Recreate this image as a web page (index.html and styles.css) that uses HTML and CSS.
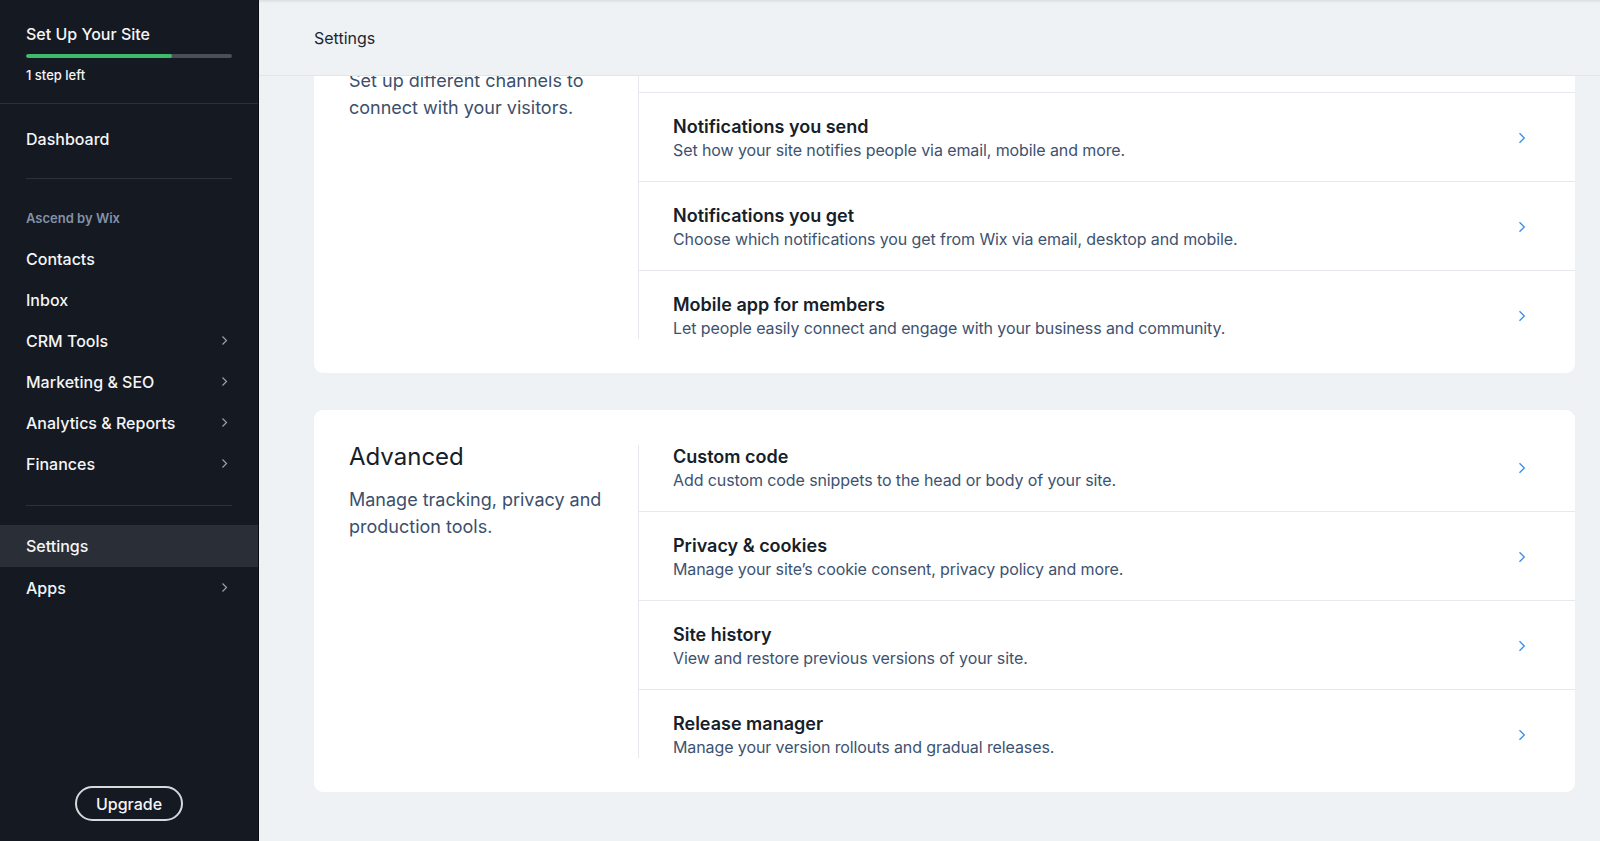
FILE: index.html
```html
<!DOCTYPE html>
<html lang="en">
<head>
<meta charset="utf-8">
<title>Settings</title>
<link rel="stylesheet" href="styles.css">
</head>
<body>
<div class="app">
  <aside class="sidebar">
    <div class="setup">
      <div class="setup-title">Set Up Your Site</div>
      <div class="progress"><div class="progress-fill" style="width:71%"></div></div>
      <div class="setup-sub">1 step left</div>
    </div>
    <nav class="nav">
      <div class="nav-item">Dashboard</div>
      <div class="nav-divider"></div>
      <div class="nav-label">Ascend by Wix</div>
      <div class="nav-item">Contacts</div>
      <div class="nav-item">Inbox</div>
      <div class="nav-item">CRM Tools<svg class="nav-chev" width="7" height="11" viewBox="0 0 7 11"><path d="M1.5 1.5 L5.5 5.5 L1.5 9.5" fill="none" stroke="#9ba1aa" stroke-width="1.2"/></svg></div>
      <div class="nav-item">Marketing &amp; SEO<svg class="nav-chev" width="7" height="11" viewBox="0 0 7 11"><path d="M1.5 1.5 L5.5 5.5 L1.5 9.5" fill="none" stroke="#9ba1aa" stroke-width="1.2"/></svg></div>
      <div class="nav-item">Analytics &amp; Reports<svg class="nav-chev" width="7" height="11" viewBox="0 0 7 11"><path d="M1.5 1.5 L5.5 5.5 L1.5 9.5" fill="none" stroke="#9ba1aa" stroke-width="1.2"/></svg></div>
      <div class="nav-item">Finances<svg class="nav-chev" width="7" height="11" viewBox="0 0 7 11"><path d="M1.5 1.5 L5.5 5.5 L1.5 9.5" fill="none" stroke="#9ba1aa" stroke-width="1.2"/></svg></div>
      <div class="nav-divider lower"></div>
      <div class="nav-item active">Settings</div>
      <div class="nav-item">Apps<svg class="nav-chev" width="7" height="11" viewBox="0 0 7 11"><path d="M1.5 1.5 L5.5 5.5 L1.5 9.5" fill="none" stroke="#9ba1aa" stroke-width="1.2"/></svg></div>
    </nav>
    <div class="upgrade-wrap"><button class="upgrade">Upgrade</button></div>
  </aside>

  <main class="main" id="main">
    <header class="topbar">Settings</header>
    <div class="content">
      <section class="card">
        <div class="card-intro">
          <h2 class="card-title">Communications</h2>
          <p class="card-desc">Set up different channels to connect with your visitors.</p>
        </div>
        <div class="rows">
          <div class="row">
            <div class="row-text">
              <div class="row-title">Social share</div>
              <div class="row-desc">Customize how your site appears when shared on social media.</div>
            </div>
            <svg class="chev" width="8" height="12" viewBox="0 0 8 12"><path d="M1.5 1.2 L6.3 6 L1.5 10.8" fill="none" stroke="#3a8ee8" stroke-width="1.3"/></svg>
          </div>
          <div class="row">
            <div class="row-text">
              <div class="row-title">Notifications you send</div>
              <div class="row-desc">Set how your site notifies people via email, mobile and more.</div>
            </div>
            <svg class="chev" width="8" height="12" viewBox="0 0 8 12"><path d="M1.5 1.2 L6.3 6 L1.5 10.8" fill="none" stroke="#3a8ee8" stroke-width="1.3"/></svg>
          </div>
          <div class="row">
            <div class="row-text">
              <div class="row-title">Notifications you get</div>
              <div class="row-desc">Choose which notifications you get from Wix via email, desktop and mobile.</div>
            </div>
            <svg class="chev" width="8" height="12" viewBox="0 0 8 12"><path d="M1.5 1.2 L6.3 6 L1.5 10.8" fill="none" stroke="#3a8ee8" stroke-width="1.3"/></svg>
          </div>
          <div class="row">
            <div class="row-text">
              <div class="row-title">Mobile app for members</div>
              <div class="row-desc">Let people easily connect and engage with your business and community.</div>
            </div>
            <svg class="chev" width="8" height="12" viewBox="0 0 8 12"><path d="M1.5 1.2 L6.3 6 L1.5 10.8" fill="none" stroke="#3a8ee8" stroke-width="1.3"/></svg>
          </div>
        </div>
      </section>

      <section class="card">
        <div class="card-intro">
          <h2 class="card-title">Advanced</h2>
          <p class="card-desc">Manage tracking, privacy and production tools.</p>
        </div>
        <div class="rows">
          <div class="row">
            <div class="row-text">
              <div class="row-title">Custom code</div>
              <div class="row-desc">Add custom code snippets to the head or body of your site.</div>
            </div>
            <svg class="chev" width="8" height="12" viewBox="0 0 8 12"><path d="M1.5 1.2 L6.3 6 L1.5 10.8" fill="none" stroke="#3a8ee8" stroke-width="1.3"/></svg>
          </div>
          <div class="row">
            <div class="row-text">
              <div class="row-title">Privacy &amp; cookies</div>
              <div class="row-desc">Manage your site’s cookie consent, privacy policy and more.</div>
            </div>
            <svg class="chev" width="8" height="12" viewBox="0 0 8 12"><path d="M1.5 1.2 L6.3 6 L1.5 10.8" fill="none" stroke="#3a8ee8" stroke-width="1.3"/></svg>
          </div>
          <div class="row">
            <div class="row-text">
              <div class="row-title">Site history</div>
              <div class="row-desc">View and restore previous versions of your site.</div>
            </div>
            <svg class="chev" width="8" height="12" viewBox="0 0 8 12"><path d="M1.5 1.2 L6.3 6 L1.5 10.8" fill="none" stroke="#3a8ee8" stroke-width="1.3"/></svg>
          </div>
          <div class="row">
            <div class="row-text">
              <div class="row-title">Release manager</div>
              <div class="row-desc">Manage your version rollouts and gradual releases.</div>
            </div>
            <svg class="chev" width="8" height="12" viewBox="0 0 8 12"><path d="M1.5 1.2 L6.3 6 L1.5 10.8" fill="none" stroke="#3a8ee8" stroke-width="1.3"/></svg>
          </div>
        </div>
      </section>
    </div>
  </main>
</div>
<script src="script.js"></script>
</body>
</html>
```

FILE: styles.css
```css
* { box-sizing: border-box; }
html, body { margin: 0; padding: 0; height: 100%; }
body {
  font-family: Inter, "Noto Sans", "Liberation Sans", sans-serif;
  background: #eff2f5;
  overflow: hidden;
}
.app {
  display: flex;
  height: 100vh;
}

/* Sidebar */
.sidebar {
  width: 259px;
  flex: 0 0 259px;
  background: #151922;
  border-right: 1px solid #0b0d12;
  color: #f4f5f7;
  display: flex;
  flex-direction: column;
}
.setup {
  padding: 24px 26px 20px;
  border-bottom: 1px solid #2b3039;
}
.setup-title {
  font-size: 16px;
  line-height: 20px;
  font-weight: 500;
}
.progress {
  margin-top: 10px;
  height: 4px;
  border-radius: 2px;
  background: #4a4e56;
  width: 206px;
  overflow: hidden;
}
.progress-fill {
  height: 100%;
  background: #3ebb6b;
  border-radius: 2px;
}
.setup-sub {
  margin-top: 9px;
  font-size: 13px;
  line-height: 16px;
  font-weight: 500;
}
.nav {
  padding-top: 14px;
  display: flex;
  flex-direction: column;
}
.nav-item {
  height: 41px;
  padding: 0 30px 0 26px;
  display: flex;
  align-items: center;
  justify-content: space-between;
  font-size: 16px;
  font-weight: 500;
  color: #f4f5f7;
}
.nav-item.active {
  background: #2a2e37;
  height: 42px;
}
.nav-chev { flex: none; }
.nav-divider {
  height: 1px;
  background: #2b3039;
  margin: 19px 26px 19px;
}
.nav-divider.lower {
  margin: 21px 26px 19px;
}
.nav-label {
  margin-top: 12px;
  margin-bottom: 12px;
  padding-left: 26px;
  font-size: 13px;
  line-height: 16px;
  font-weight: 600;
  color: #8392a6;
}
.upgrade-wrap {
  margin-top: auto;
  padding-bottom: 20px;
  display: flex;
  justify-content: center;
}
.upgrade {
  width: 108px;
  height: 35px;
  border-radius: 18px;
  border: 2px solid #d6d8dc;
  background: transparent;
  color: #f4f5f7;
  font-family: inherit;
  font-size: 16px;
  font-weight: 500;
}

/* Main */
.main {
  flex: 1;
  height: 100vh;
  overflow-y: auto;
  scrollbar-width: none;
}
.main::-webkit-scrollbar { display: none; }
.topbar {
  position: sticky;
  top: 0;
  z-index: 5;
  height: 76px;
  padding-left: 55px;
  display: flex;
  align-items: center;
  background: #eef2f5;
  border-bottom: 1px solid #e0e5eb;
  box-shadow: inset 0 3px 3px -2px rgba(20, 30, 45, 0.12);
  font-size: 16px;
  color: #1d2633;
}
.content {
  padding: 24px 25px 60px 55px;
  display: flex;
  flex-direction: column;
  gap: 37px;
}
.card {
  background: #ffffff;
  border-radius: 9px;
  display: flex;
  padding: 35px 0 34px;
}
.card-intro {
  width: 324px;
  flex: 0 0 324px;
  padding: 0 36px 0 35px;
}
.card-title {
  margin: 0;
  font-size: 24px;
  line-height: 24px;
  font-weight: 400;
  color: #162029;
}
.card-desc {
  margin: 17px 0 0;
  font-size: 18px;
  line-height: 27px;
  color: #3c4f6b;
}
.rows {
  flex: 1;
  border-left: 1px solid #e5e9ee;
  display: flex;
  flex-direction: column;
}
.row {
  display: flex;
  align-items: center;
  justify-content: space-between;
  padding: 22px 49px 20px 34px;
  border-top: 1px solid #e5e9ee;
}
.row:first-child {
  border-top: none;
  padding-top: 0;
}
.row:last-child {
  padding-bottom: 0;
}
.row-title {
  font-size: 18px;
  line-height: 24px;
  font-weight: 600;
  color: #162029;
}
.row-desc {
  font-size: 16px;
  line-height: 22px;
  letter-spacing: -0.1px;
  color: #3d5270;
}
.chev { flex: none; }
```

FILE: script.js
```js
document.getElementById('main').scrollTop = 109;
```
